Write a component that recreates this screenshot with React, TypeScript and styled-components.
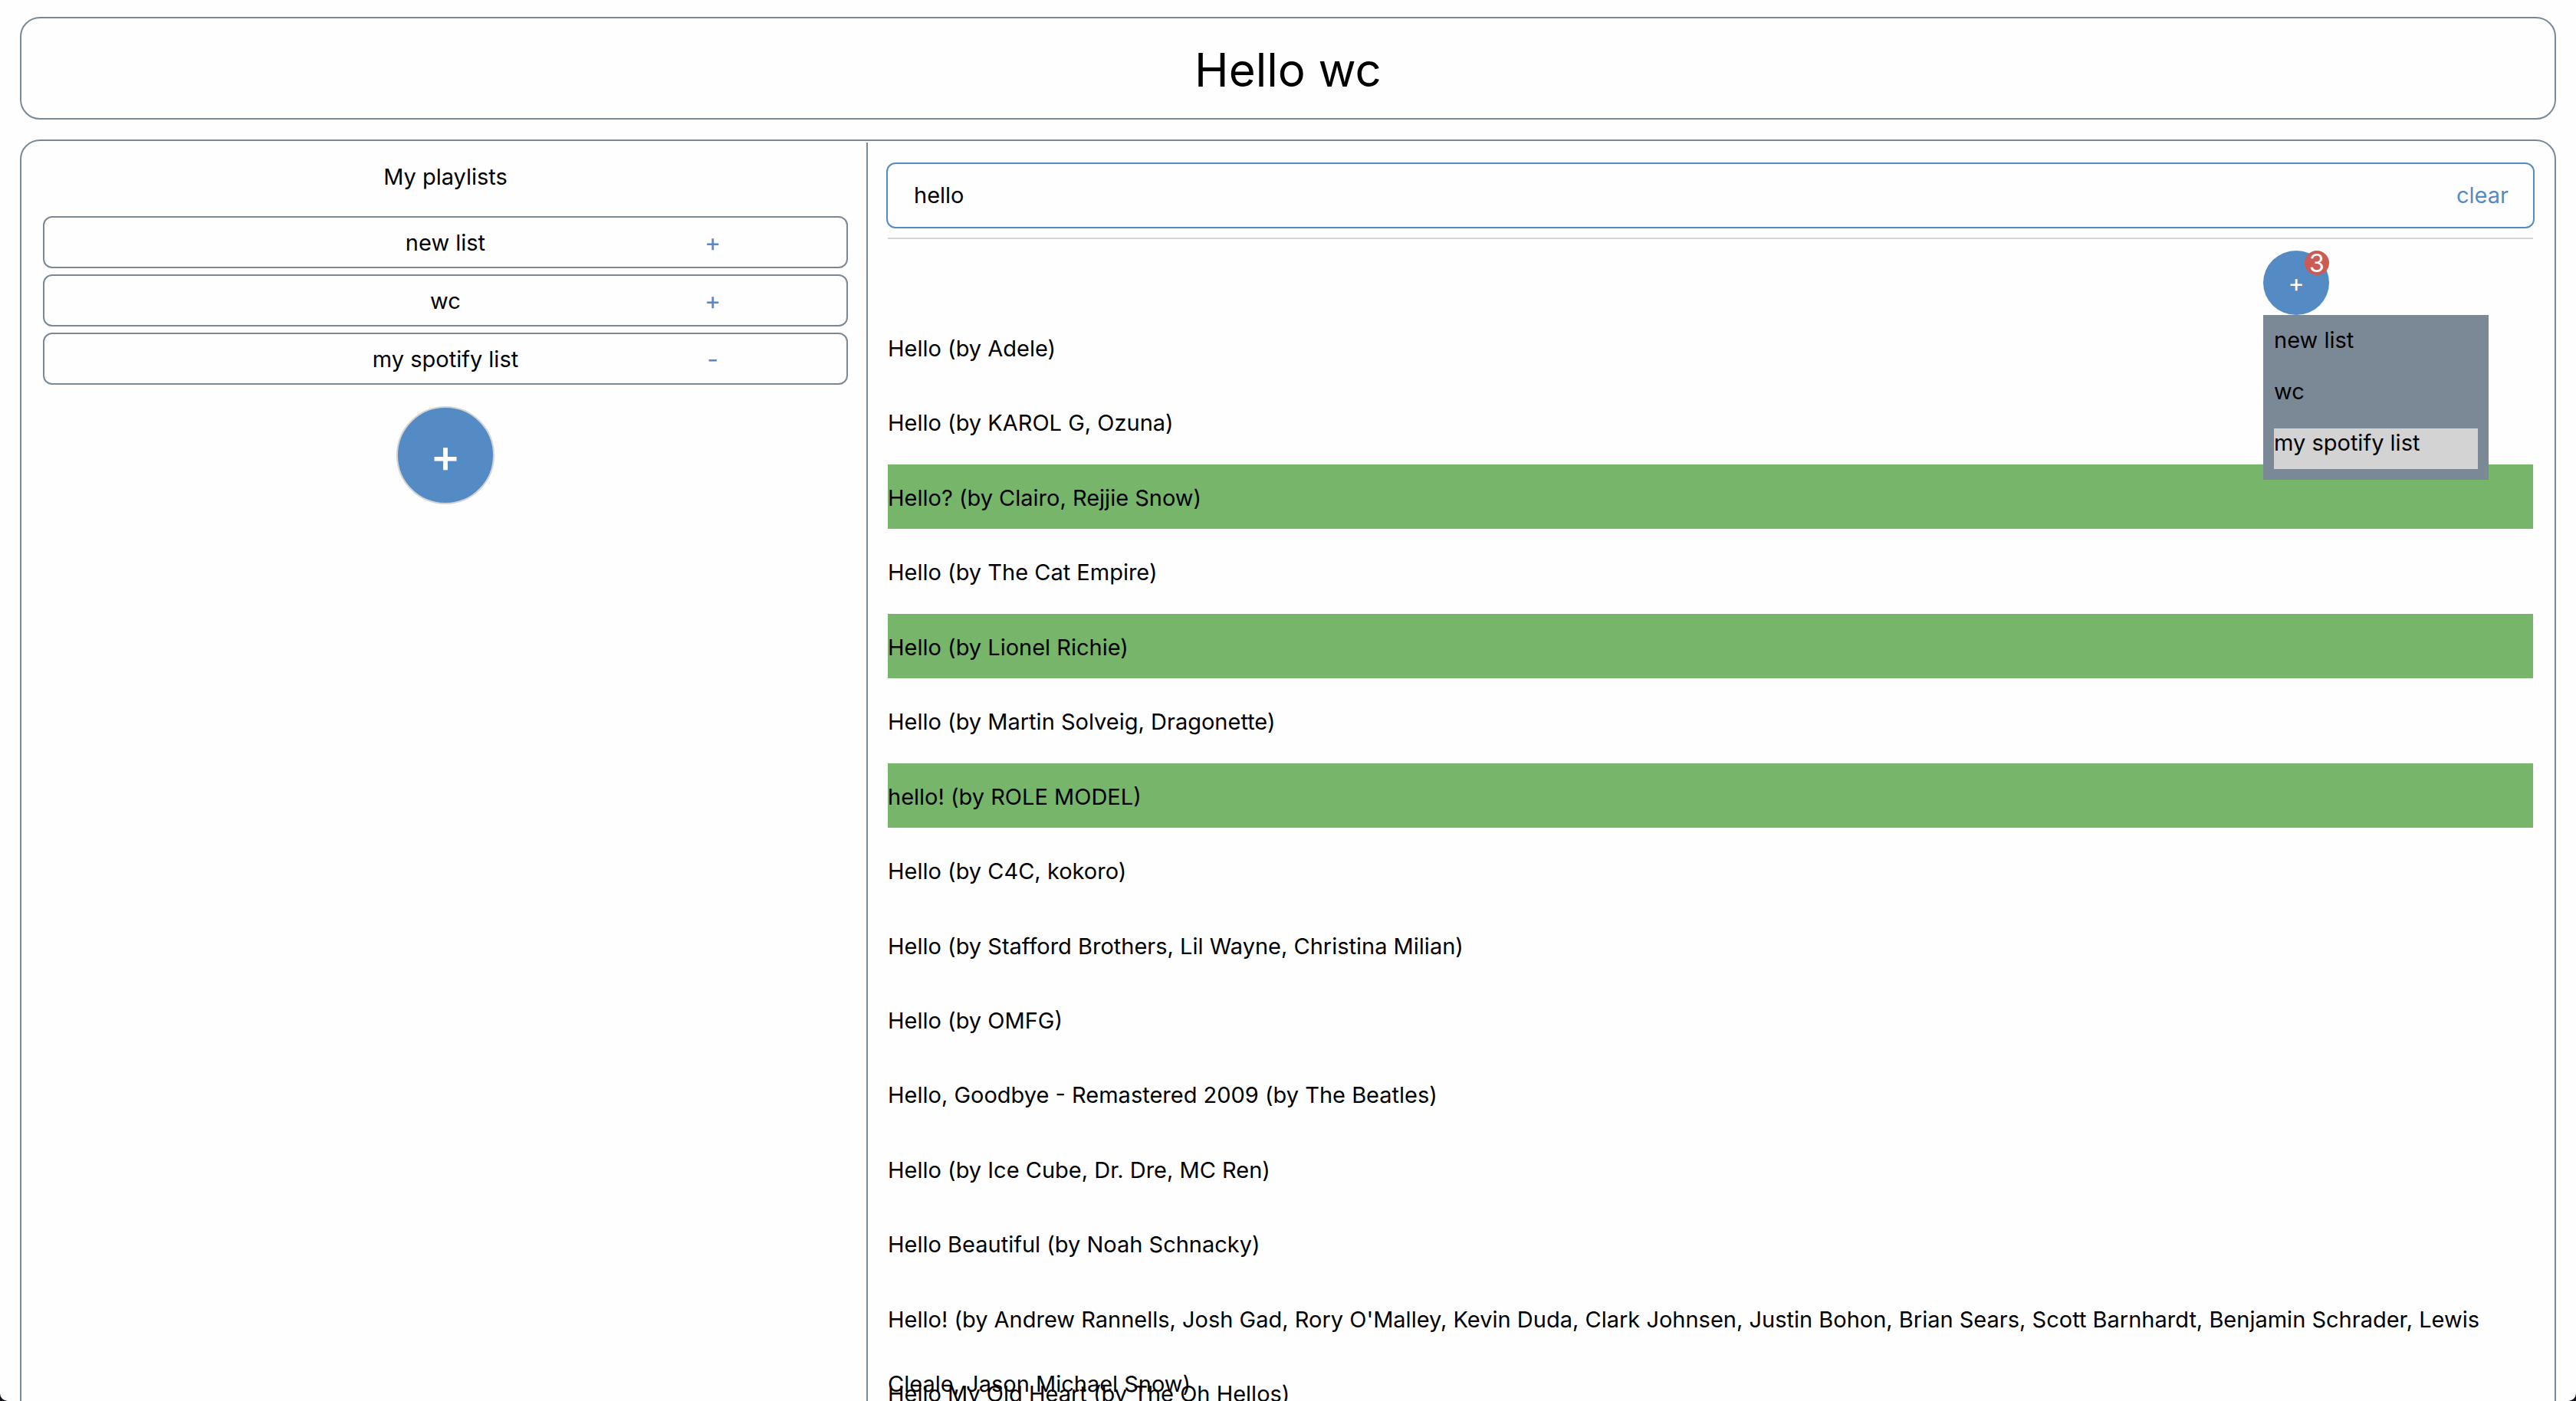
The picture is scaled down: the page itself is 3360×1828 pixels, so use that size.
import React, { useState } from "react";
import styled, { createGlobalStyle } from "styled-components";

const color = {
  page: "#fefefe",
  frame: "#111317",
  slate: "#7b8997",
  blue: "#558bc5",
  green: "#76b56a",
  red: "#cb5b55",
  silver: "#d3d3d3",
};

const GlobalStyle = createGlobalStyle`
  *, *::before, *::after { box-sizing: border-box; }
  html { background: ${color.frame}; }
  body { margin: 0; }
  body, button, input {
    font-family: Inter, "Liberation Sans", sans-serif;
    font-size: 29px;
    line-height: 38px;
    color: #000;
  }
  button { border: 0; padding: 0; background: none; cursor: pointer; }
`;

const Page = styled.div`
  display: flex;
  flex-direction: column;
  gap: 26px;
  height: 100vh;
  overflow: hidden;
  padding: 22px 26px 0;
  background: ${color.page};
  border-radius: 0 0 10px 10px;
`;

const Header = styled.header`
  flex: none;
  padding: 28px 26px 24px;
  border: 2px solid ${color.slate};
  border-radius: 26px;
  text-align: center;
`;

const Title = styled.h1`
  margin: 0;
  font-size: 60px;
  line-height: 78px;
  font-weight: 400;
`;

const Panel = styled.main`
  flex: 1 0 auto;
  display: grid;
  grid-template-columns: 1fr 2fr;
  padding: 2px;
  border: 2px solid ${color.slate};
  border-radius: 26px;
`;

const Sidebar = styled.section`
  display: flex;
  flex-direction: column;
  align-items: center;
  padding: 26px 24px 26px 26px;
`;

const SidebarTitle = styled.h2`
  margin: 0 0 32px;
  font-size: 29px;
  line-height: 38px;
  font-weight: 400;
`;

const Playlists = styled.ul`
  display: flex;
  flex-direction: column;
  gap: 8px;
  width: 100%;
  margin: 0 0 28px;
  padding: 0;
  list-style: none;
`;

const Playlist = styled.li`
  display: grid;
  grid-template-columns: repeat(3, 1fr);
  align-items: center;
  height: 68px;
  padding-top: 2px;
  border: 2px solid ${color.slate};
  border-radius: 12px;
  text-align: center;
`;

const PlaylistName = styled.span`
  grid-column: 2;
`;

const ToggleButton = styled.button`
  color: ${color.blue};
  font-size: 32px;
`;

const CreateButton = styled.button`
  width: 128px;
  height: 128px;
  border: 2px solid ${color.silver};
  border-radius: 50%;
  background: ${color.blue};
  color: #fff;
  font-size: 60px;
  font-weight: 500;
`;

const Results = styled.section`
  padding: 26px;
  border-left: 2px solid ${color.slate};
`;

const SearchBox = styled.form`
  display: flex;
  align-items: center;
  height: 86px;
  margin: 0 -2px 12px;
  padding: 0 32px 0 34px;
  border: 2px solid ${color.blue};
  border-radius: 12px;
`;

const SearchInput = styled.input`
  flex: 1;
  min-width: 0;
  padding: 0;
  border: 0;
  outline: 0;
  background: none;
`;

const ClearButton = styled.button`
  color: ${color.blue};
`;

const Rule = styled.hr`
  height: 2px;
  margin: 0 0 15px;
  border: 0;
  background: ${color.silver};
`;

const Toolbar = styled.div`
  display: flex;
  justify-content: flex-end;
  padding-right: 266px;
`;

const MenuAnchor = styled.div`
  position: relative;
`;

const AddButton = styled.button`
  display: block;
  width: 86px;
  height: 84px;
  padding-top: 2px;
  border-radius: 50%;
  background: ${color.blue};
  color: #fff;
  font-size: 32px;
`;

const Badge = styled.span`
  position: absolute;
  top: 0;
  right: 0;
  width: 32px;
  height: 32px;
  border-radius: 50%;
  background: ${color.red};
  color: #fff;
  font-size: 32px;
  line-height: 34px;
  text-align: center;
  pointer-events: none;
`;

const Menu = styled.div`
  position: absolute;
  top: 100%;
  left: 0;
  z-index: 1;
  display: flex;
  flex-direction: column;
  gap: 14px;
  width: 294px;
  padding: 14px;
  background: ${color.slate};
`;

const MenuItem = styled.button<{ $active: boolean }>`
  display: flex;
  align-items: flex-start;
  height: 53px;
  background: ${(p) => (p.$active ? color.silver : "transparent")};
`;

const Songs = styled.ul`
  display: flex;
  flex-direction: column;
  gap: 0.4vw;
  margin: 0;
  padding: 0;
  list-style: none;
`;

const Song = styled.li<{ $selected: boolean }>`
  height: 84px;
  padding-top: 2px;
  line-height: 84px;
  background: ${(p) => (p.$selected ? color.green : "transparent")};
  cursor: pointer;
`;

const playlists = ["new list", "wc", "my spotify list"];

const songs = [
  "Hello (by Adele)",
  "Hello (by KAROL G, Ozuna)",
  "Hello? (by Clairo, Rejjie Snow)",
  "Hello (by The Cat Empire)",
  "Hello (by Lionel Richie)",
  "Hello (by Martin Solveig, Dragonette)",
  "hello! (by ROLE MODEL)",
  "Hello (by C4C, kokoro)",
  "Hello (by Stafford Brothers, Lil Wayne, Christina Milian)",
  "Hello (by OMFG)",
  "Hello, Goodbye - Remastered 2009 (by The Beatles)",
  "Hello (by Ice Cube, Dr. Dre, MC Ren)",
  "Hello Beautiful (by Noah Schnacky)",
  "Hello! (by Andrew Rannells, Josh Gad, Rory O'Malley, Kevin Duda, Clark Johnsen, Justin Bohon, Brian Sears, Scott Barnhardt, Benjamin Schrader, Lewis Cleale, Jason Michael Snow)",
  "Hello My Old Heart (by The Oh Hellos)",
];

export default function App() {
  const [query, setQuery] = useState("hello");
  const [open, setOpen] = useState("my spotify list");
  const [menuOpen, setMenuOpen] = useState(true);
  const [selected, setSelected] = useState<number[]>([2, 4, 6]);

  const toggleSong = (index: number) =>
    setSelected((current) =>
      current.includes(index)
        ? current.filter((i) => i !== index)
        : [...current, index]
    );

  return (
    <>
      <GlobalStyle />
      <Page>
        <Header>
          <Title>Hello wc</Title>
        </Header>
        <Panel>
          <Sidebar>
            <SidebarTitle>My playlists</SidebarTitle>
            <Playlists>
              {playlists.map((name) => (
                <Playlist key={name}>
                  <PlaylistName>{name}</PlaylistName>
                  <ToggleButton
                    type="button"
                    aria-label={`Toggle ${name}`}
                    onClick={() => setOpen(open === name ? "" : name)}
                  >
                    {open === name ? "-" : "+"}
                  </ToggleButton>
                </Playlist>
              ))}
            </Playlists>
            <CreateButton type="button" aria-label="Create playlist">
              +
            </CreateButton>
          </Sidebar>
          <Results>
            <SearchBox onSubmit={(event) => event.preventDefault()}>
              <SearchInput
                type="text"
                aria-label="Search songs"
                value={query}
                onChange={(event) => setQuery(event.target.value)}
              />
              <ClearButton type="button" onClick={() => setQuery("")}>
                clear
              </ClearButton>
            </SearchBox>
            <Rule />
            <Toolbar>
              <MenuAnchor>
                <AddButton
                  type="button"
                  aria-label="Add selected songs to a playlist"
                  aria-expanded={menuOpen}
                  onClick={() => setMenuOpen(!menuOpen)}
                >
                  +
                </AddButton>
                {selected.length > 0 && <Badge>{selected.length}</Badge>}
                {menuOpen && (
                  <Menu>
                    {playlists.map((name) => (
                      <MenuItem
                        key={name}
                        type="button"
                        $active={name === "my spotify list"}
                        onClick={() => setMenuOpen(false)}
                      >
                        {name}
                      </MenuItem>
                    ))}
                  </Menu>
                )}
              </MenuAnchor>
            </Toolbar>
            <Songs>
              {songs.map((song, index) => (
                <Song
                  key={song}
                  $selected={selected.includes(index)}
                  onClick={() => toggleSong(index)}
                >
                  {song}
                </Song>
              ))}
            </Songs>
          </Results>
        </Panel>
      </Page>
    </>
  );
}
